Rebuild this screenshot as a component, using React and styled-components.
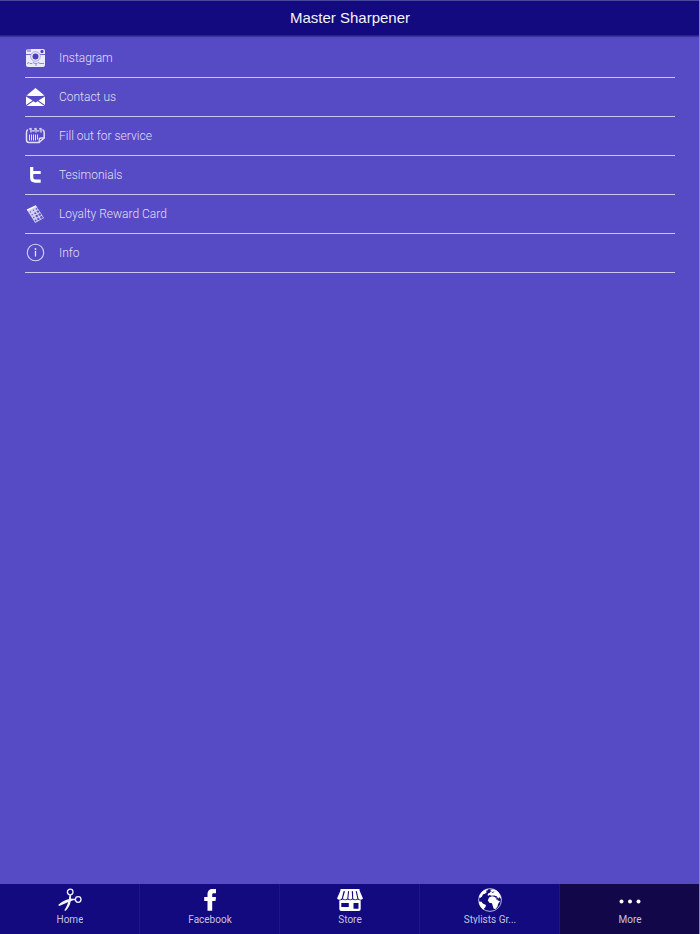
import React from "react";
import styled, { createGlobalStyle } from "styled-components";

const GlobalStyle = createGlobalStyle`
  * {
    box-sizing: border-box;
  }

  body {
    margin: 0;
    background-color: #564bc5;
    font-family: Roboto, "Liberation Sans", sans-serif;
  }
`;

const Page = styled.div`
  position: relative;
  min-height: 100vh;
  display: flex;
  flex-direction: column;
  background-color: #564bc5;

  /* thin edge over the right side of every bar */
  &::after {
    content: "";
    position: absolute;
    top: 0;
    right: 0;
    bottom: 0;
    width: 1px;
    background-color: #8a86c4;
    pointer-events: none;
  }
`;

const Header = styled.header`
  height: 36px;
  display: flex;
  align-items: center;
  justify-content: center;
  background-color: #120a7e;
  border-top: 1px solid #454a9c;
  border-bottom: 1px solid #2a2288;
  box-shadow: 0 1px 1px rgba(20, 12, 90, 0.4);
`;

const Title = styled.h1`
  margin: 0;
  color: #f4f3fa;
  font-family: "Liberation Sans", Arial, sans-serif;
  font-size: 15px;
  font-weight: normal;
  line-height: 20px;
`;

const Menu = styled.ul`
  flex: 1;
  margin: 0;
  padding: 3px 25px 0;
  list-style: none;
`;

const MenuItem = styled.li`
  height: 39px;
  border-bottom: 1px solid #cbc7ee;
`;

const MenuLink = styled.a`
  height: 100%;
  display: flex;
  align-items: center;
  gap: 14px;
  color: #e2dff7;
  font-size: 12px;
  font-weight: 300;
  line-height: 16px;
  text-decoration: none;

  svg {
    width: 20px;
    height: 20px;
    flex: none;
  }
`;

const TabBar = styled.nav`
  display: grid;
  grid-template-columns: repeat(5, 1fr);
  height: 50px;
  background-color: #120a7e;
`;

const Tab = styled.a`
  min-width: 0;
  display: flex;
  flex-direction: column;
  align-items: center;
  gap: 1px;
  padding-top: 3px;
  color: #c5c3e0;
  background-color: ${(props) => (props.$active ? "#120748" : "transparent")};
  box-shadow: inset -1px 0 ${(props) => (props.$active ? "#120748" : "#1d1686")};
  text-decoration: none;

  svg {
    width: 26px;
    height: 26px;
    flex: none;
  }
`;

const TabLabel = styled.span`
  max-width: 58px;
  height: 10px;
  overflow: hidden;
  font-size: 10px;
  line-height: 12px;
  text-overflow: ellipsis;
  white-space: nowrap;
`;

const InstagramIcon = () => (
  <svg viewBox="0 0 20 20" aria-hidden="true">
    <path fill="#ece9fa" d="M3 1h15a2 2 0 0 1 2 2v14a2 2 0 0 1-2 2H3a2 2 0 0 1-2-2V3a2 2 0 0 1 2-2z" />
    <path stroke="#6d64cd" strokeWidth="1" d="M1 6.5h5M15 6.5h5M3 1v3M5 1v3" />
    <rect x="15.500" y="2" width="3" height="3" rx="1" fill="#4a3fbb" />
    <circle cx="10.500" cy="8.500" r="4.800" fill="#ece9fa" stroke="#9a93dd" strokeWidth="0.800" />
    <circle cx="10.500" cy="8.500" r="3" fill="#4a3fbb" />
    <path
      fill="none"
      stroke="#8f88d8"
      strokeWidth="1"
      d="M2 15.500l2-1 1 1h2l1-1 2 1h2l1-1 2 1h4M11 16v2"
    />
  </svg>
);

const EnvelopeIcon = () => (
  <svg viewBox="0 0 20 20" aria-hidden="true">
    <path fill="#fff" d="M10.500 1L19.500 8.500 16 9H5L1.500 8.500z" />
    <path
      fill="#fff"
      d="M1 9.500l6.500 4L1 18zM20 9.500l-6.500 4L20 18zM8.300 14.200l2.200 1.200 2.200-1.200L19.500 19h-18z"
    />
  </svg>
);

const CalendarIcon = () => (
  <svg viewBox="0 0 20 20" fill="none" stroke="#e2dff6" strokeLinecap="round" aria-hidden="true">
    <path strokeWidth="1.500" d="M2.500 4Q1.500 4.500 1.500 7v7q0 2.500 2.500 2.500h10l5.200-4.500V7q0-2.500-1.200-3" />
    <path strokeWidth="1.300" d="M14.200 16.200v-2.500q0-1.700 2-1.700h2.800" />
    <path
      strokeWidth="1.300"
      d="M6 2.500v3.500M11 2.500v3.500M16 2.500v3.500M4.500 2.800H6M9.500 2.800H11M14.500 2.800H16M7.500 4.800h2M12.500 4.800h1.500"
    />
    <path strokeWidth="1" strokeLinecap="butt" d="M4.500 8.500v6M6.500 8.500v6M8.500 8.500v6M10.500 8.500v6M12.500 8.500v5" />
  </svg>
);

const TwitterIcon = () => (
  <svg viewBox="0 0 20 20" fill="none" stroke="#fff" strokeWidth="3.200" aria-hidden="true">
    <path d="M6.700 2v10.500q0 3.600 3.600 3.600h5.400M7 7.500h8.700" />
  </svg>
);

const CardIcon = () => (
  <svg viewBox="0 0 20 20" aria-hidden="true">
    <path fill="#d3cff0" d="M2 6L11 1.500 19 14l-8.800 5z" />
    <path stroke="#fff" strokeWidth="1.400" d="M2 6.200L11 1.800" />
    <g fill="#5e53c8">
      <circle cx="5.500" cy="8" r="0.700" />
      <circle cx="8.500" cy="6.300" r="0.700" />
      <circle cx="11.500" cy="4.800" r="0.900" />
      <circle cx="7.200" cy="10.800" r="0.700" />
      <circle cx="10.200" cy="9.200" r="1" />
      <circle cx="13" cy="7.600" r="1.200" />
      <circle cx="8.800" cy="13.500" r="0.800" />
      <circle cx="11.800" cy="12" r="1.200" />
      <circle cx="14.700" cy="10.500" r="1.300" />
      <circle cx="10.600" cy="16.500" r="1" />
      <circle cx="13.400" cy="15" r="1.200" />
      <circle cx="16.400" cy="13.400" r="1.300" />
    </g>
  </svg>
);

const InfoIcon = () => (
  <svg viewBox="0 0 20 20" aria-hidden="true">
    <circle cx="10.500" cy="9.500" r="8.200" fill="none" stroke="#d5d1f2" strokeWidth="1.100" />
    <circle cx="10.500" cy="6" r="0.900" fill="#e6e3f8" />
    <path stroke="#e6e3f8" strokeWidth="1.300" d="M10.500 7.800V13.500" />
  </svg>
);

const ScissorsIcon = () => (
  <svg viewBox="0 0 26 26" fill="none" stroke="#f4f3fb" aria-hidden="true">
    <circle cx="13.200" cy="5" r="2.800" strokeWidth="1.300" />
    <circle cx="21.200" cy="12.500" r="2.800" strokeWidth="1.300" />
    <path strokeWidth="1.500" d="M13.200 8v5M18.300 12.500h-5" />
    <path
      fill="#f4f3fb"
      stroke="none"
      d="M12.300 9.500h1.800l-.4 4.500c-.5 4-2.500 7.500-5.400 10l-1-.8c2-3 3.500-6.500 4.600-10z"
    />
    <path fill="#f4f3fb" stroke="none" d="M15.500 11.700v1.700L11 15.300l-8.800 3.600-1-.9c3-3 6-4.700 9.800-5.800z" />
  </svg>
);

const FacebookIcon = () => (
  <svg viewBox="0 0 26 26" aria-hidden="true">
    <path
      fill="#fff"
      d="M10.500 23.800V14H7.200v-4h3.300V7.500C10.500 3.800 12.500 2 15.500 2H19v4.200h-2.200c-1.200 0-1.600.6-1.600 1.600V10H19l-.5 4h-3.300v9.800z"
    />
  </svg>
);

const StoreIcon = () => (
  <svg viewBox="0 0 26 26" aria-hidden="true">
    <path fill="#fff" d="M3.500 2h19v2.200h-19z" />
    <path
      fill="#fff"
      d="M3.500 3.500h3.200L4.800 11.500Q2.500 14 0 11.500zM8.200 3.500h2.900l-.8 8q-2.200 2-4.400 0zM12.200 3.500h2.500l.5 8q-2 2-3.900 0zM16 3.500h2.500l1.900 8q-2.200 2-4.200 0zM19.700 3.500h2.800L26 11.500q-2.500 2.500-4.600 0z"
    />
    <path
      fill="#fff"
      fillRule="evenodd"
      d="M2.300 13.200q2.200.4 3.500-.7 2.300 1.500 5 0 2.300 1.400 4.900 0 2.600 1.500 5 0 1.300 1.100 3 .7V22q0 2-2 2H4.300q-2 0-2-2zM4.300 16v4h7.500v-4zM16.500 16v5.700h5V16z"
    />
  </svg>
);

const GlobeIcon = () => (
  <svg viewBox="0 0 26 26" aria-hidden="true">
    <circle cx="13" cy="13" r="11.400" fill="none" stroke="#c9c7e6" strokeWidth="0.900" />
    <g fill="#fff">
      {/* Americas */}
      <path d="M2 10C3.200 6 6.500 2.800 10.500 2l.8 1-2.300.8.8 1.400L7.500 7 6 7.300 5 9.500 3 11z" />
      <path d="M1.900 14.500l2.600.3 1.300 1.700 3.200 1.500-.6 2.300-1.400 1.200-.3 1.400C3.700 21 2 18 1.900 14.500z" />
      {/* Europe and Asia */}
      <path d="M13 2.800l3.500-.6 3.500 1.600 2.600 3.200 1.600 4-.9.600-1.100-1.600-.9 1.800-1.600-2.500-2.600-.8-2.500.3-2-.9-1 .8-1.100-.5.600-1.700 1.700-.7 1.300-1.800z" />
      {/* Africa */}
      <path d="M12.300 10.200l3-.9 4.200 1.100 1.300 3.200 2.200.3-1.900 3-.7 2.800-2 2.300-1.700-.2-1-3-.7-2.500-2.700-.5-1.500-2.500z" />
    </g>
    <path fill="none" stroke="#120a7e" strokeWidth="0.700" d="M14.500 4.800l1.500 1 1-1.500M18.500 10l1.700 3" />
  </svg>
);

const MoreIcon = () => (
  <svg viewBox="0 0 26 26" fill="#fff" aria-hidden="true">
    <circle cx="4.500" cy="14.500" r="2" />
    <circle cx="13" cy="14.500" r="2" />
    <circle cx="21.500" cy="14.500" r="2" />
  </svg>
);

const menuItems = [
  { label: "Instagram", icon: InstagramIcon },
  { label: "Contact us", icon: EnvelopeIcon },
  { label: "Fill out for service", icon: CalendarIcon },
  { label: "Tesimonials", icon: TwitterIcon },
  { label: "Loyalty Reward Card", icon: CardIcon },
  { label: "Info", icon: InfoIcon },
];

const tabs = [
  { label: "Home", icon: ScissorsIcon },
  { label: "Facebook", icon: FacebookIcon },
  { label: "Store", icon: StoreIcon },
  { label: "Stylists Gr...", icon: GlobeIcon },
  { label: "More", icon: MoreIcon, active: true },
];

function App() {
  return (
    <Page>
      <GlobalStyle />
      <Header>
        <Title>Master Sharpener</Title>
      </Header>
      <Menu>
        {menuItems.map(({ label, icon: Icon }) => (
          <MenuItem key={label}>
            <MenuLink href="#">
              <Icon />
              {label}
            </MenuLink>
          </MenuItem>
        ))}
      </Menu>
      <TabBar>
        {tabs.map(({ label, icon: Icon, active }) => (
          <Tab key={label} href="#" $active={active} aria-current={active ? "page" : undefined}>
            <Icon />
            <TabLabel>{label}</TabLabel>
          </Tab>
        ))}
      </TabBar>
    </Page>
  );
}

export default App;
